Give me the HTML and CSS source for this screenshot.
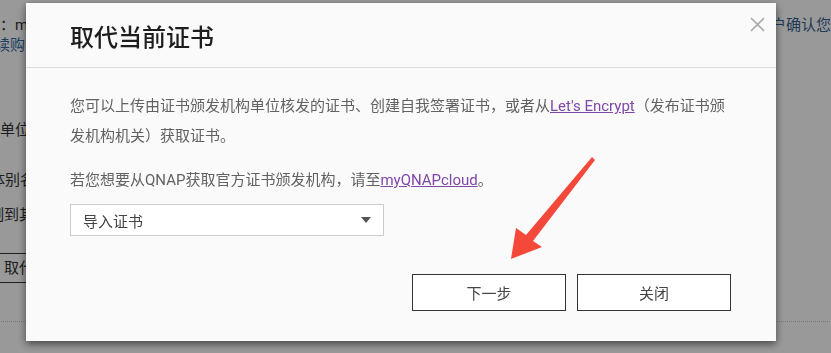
FILE: index.html
```html
<!DOCTYPE html>
<html lang="zh-CN">
<head>
  <meta charset="UTF-8">
  <title>取代当前证书</title>
  <link rel="stylesheet" href="styles.css">
</head>
<body>
  <div class="page">
    <div class="form">
      <div class="row r1">证书名称：myQNAPcloud</div>
      <div class="row r2 blue">继续购买</div>
      <div class="row r3">发行者：</div>
      <div class="row r4">组织单位</div>
      <div class="row r5">主体别名</div>
      <div class="row r6">复制到其他设备</div>
      <div class="oldbtn">取代当前证书</div>
    </div>
    <div class="note">用户确认您的证书</div>
    <div class="rule"></div>
  </div>

  <div class="overlay"></div>

  <div class="modal">
    <div class="modal-head">
      <h1>取代当前证书</h1>
      <span class="close">
        <svg width="15" height="15" viewBox="0 0 15 15"><path d="M1 1 L14 14 M14 1 L1 14" stroke="#a8a8a8" stroke-width="1.6" fill="none"/></svg>
      </span>
    </div>
    <div class="modal-body">
      <p>您可以上传由证书颁发机构单位核发的证书、创建自我签署证书，或者从<a href="#">Let's Encrypt</a>（发布证书颁发机构机关）获取证书。</p>
      <p class="p2">若您想要从QNAP获取官方证书颁发机构，请至<a href="#">myQNAPcloud</a>。</p>
      <div class="select">
        <span>导入证书</span>
        <span class="caret"></span>
      </div>
    </div>
    <div class="modal-foot">
      <button class="btn">下一步</button>
      <button class="btn">关闭</button>
    </div>
  </div>

  <svg class="arrow" width="831" height="353" viewBox="0 0 831 353">
    <polygon points="592,157 595,160 533,241 542,247 511,259 516,228 526,235" fill="#f4483a"/>
  </svg>
</body>
</html>
```

FILE: styles.css
```css
body { margin: 0; background: #fff; font-family: Roboto, "Noto Sans CJK SC", sans-serif; overflow: hidden; }

.page { display: grid; grid-template-columns: 300px 1fr; margin-left: -60px; font-size: 15px; color: #333; }
.form { display: flex; flex-direction: column; }
.row { line-height: 20px; white-space: nowrap; }
.r1 { margin-top: 15px; }
.r2 { text-indent: 40px; }
.r3 { margin-top: 28px; }
.r4 { margin-top: 17px; text-indent: 30px; }
.r5 { margin-top: 30px; text-indent: 35px; }
.r6 { margin-top: 15px; text-indent: 34px; }
.blue { color: #2f6aa8; }
.oldbtn { margin-top: 28px; height: 28px; line-height: 28px; border-top: 1px solid #333; border-bottom: 1px solid #333; padding-left: 64px; width: 200px; }
.note { margin-top: 15px; line-height: 20px; padding-left: 516px; white-space: nowrap; color: #33618f; }
.rule { grid-column: 1 / -1; margin-top: 38px; border-top: 1px dotted #c6c6c6; }

.overlay { position: fixed; inset: 0; background: rgba(0,0,0,0.4); }

.modal { position: fixed; left: 26px; top: 3px; width: 750px; height: 338px; background: #fafafa; box-shadow: 0 3px 8px rgba(0,0,0,0.55); display: flex; flex-direction: column; }
.modal-head { height: 64px; border-bottom: 1px solid #ddd; padding: 0 44px; display: flex; align-items: center; }
.modal-head h1 { margin: 0; font-size: 24px; font-weight: 500; color: #1e1e1e; }
.close { position: absolute; right: 11px; top: 14px; line-height: 0; }

.modal-body { padding: 23px 44px 0; font-size: 15px; color: #626262; }
.modal-body p { margin: 0; line-height: 30px; }
.modal-body .p2 { margin-top: 14px; }
.modal-body a { color: #7e47a8; }
.select { margin-top: 9px; height: 30px; border: 1px solid #ccc; background: #fff; display: flex; align-items: center; justify-content: space-between; padding: 0 12px; width: 288px; color: #444; }
.caret { width: 0; height: 0; border-left: 5px solid transparent; border-right: 5px solid transparent; border-top: 6px solid #555; }

.modal-foot { margin-top: auto; padding: 0 45px 30px; display: flex; justify-content: flex-end; gap: 11px; }
.btn { width: 154px; height: 37px; background: #fff; border: 1px solid #333; font-family: inherit; font-size: 15px; color: #444; }

.arrow { position: fixed; left: 0; top: 0; }
```
